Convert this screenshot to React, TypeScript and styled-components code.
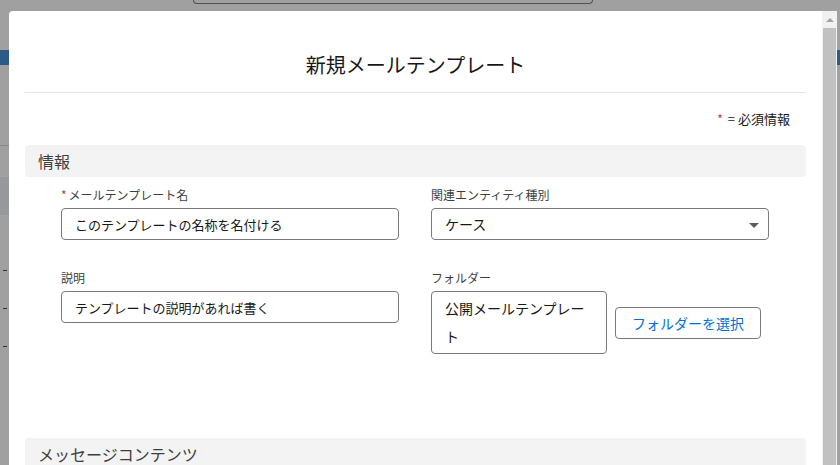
import React from "react";
import styled, { createGlobalStyle } from "styled-components";

const Global = createGlobalStyle`
  html, body { margin: 0; padding: 0; }
  body {
    font-family: "Noto Sans CJK JP", "Noto Sans", "Liberation Sans", sans-serif;
    color: #080707;
    background: #a0a0a0;
  }
  * { box-sizing: border-box; }
`;

const Screen = styled.div`
  width: 840px;
  height: 465px;
  overflow: hidden;
  background: #a0a0a0;
  display: flex;
  flex-direction: column;
`;

const TopStrip = styled.div`
  height: 11px;
  flex: none;
  display: flex;
  align-items: flex-start;
  padding-left: 193px;
`;

const SearchBoxEdge = styled.div`
  width: 400px;
  height: 4px;
  border: 1px solid #525252;
  border-top: none;
  border-radius: 0 0 5px 5px;
`;

const MainRow = styled.div`
  flex: 1;
  display: flex;
  min-height: 0;
`;

const Gutter = styled.div<{ $w: number }>`
  width: ${(p) => p.$w}px;
  flex: none;
  display: flex;
  flex-direction: column;
  overflow: hidden;
`;

const GutterSpace = styled.div<{ $h: number }>`
  height: ${(p) => p.$h}px;
  flex: none;
`;

const GutterBand = styled.div<{ $h: number; $c: string }>`
  height: ${(p) => p.$h}px;
  background: ${(p) => p.$c};
  flex: none;
`;

const GutterDash = styled.div`
  height: 1px;
  width: 4px;
  margin-left: 3px;
  background: #333;
  flex: none;
`;

const Modal = styled.div`
  width: 813px;
  flex: none;
  background: #fff;
  border-radius: 4px 0 0 0;
  display: flex;
  flex-direction: column;
`;

const Header = styled.header`
  margin: 0 16px;
  padding: 40px 0 13px;
  border-bottom: 1px solid #e5e5e5;
  text-align: center;
`;

const Title = styled.h2`
  margin: 0;
  font-size: 20px;
  line-height: 28px;
  font-weight: 400;
  color: #181818;
`;

const Body = styled.div`
  padding: 0 16px;
  display: flex;
  flex-direction: column;
`;

const Legend = styled.div`
  margin: 16px 16px 0 0;
  line-height: 20px;
  font-size: 13px;
  text-align: right;
  color: #181818;
`;

const Req = styled.abbr`
  color: #c23934;
  text-decoration: none;
  font-size: 12px;
  margin-right: 2px;
`;

const SectionHeader = styled.h3<{ $mt: number }>`
  margin: ${(p) => p.$mt}px 0 0;
  height: 32px;
  line-height: 32px;
  padding: 0 13px;
  background: #f3f3f3;
  border-radius: 4px;
  font-size: 16px;
  font-weight: 400;
  color: #3e3e3c;
`;

const FieldGrid = styled.div`
  display: grid;
  grid-template-columns: 338px 338px;
  column-gap: 32px;
  row-gap: 29px;
  padding: 9px 36px 0;
  align-items: start;
`;

const Field = styled.div`
  display: flex;
  flex-direction: column;
`;

const Label = styled.label`
  font-size: 12px;
  line-height: 18px;
  color: #3e3e3c;
  margin-bottom: 4px;
`;

const InputBox = styled.div<{ $size: number }>`
  height: 32px;
  border: 1px solid #7a7a7a;
  border-radius: 4px;
  padding: 0 13px;
  display: flex;
  align-items: center;
  font-size: ${(p) => p.$size}px;
  color: #181818;
  position: relative;
`;

const Caret = styled.span`
  position: absolute;
  right: 9px;
  top: 14px;
  width: 0;
  height: 0;
  border-left: 5px solid transparent;
  border-right: 5px solid transparent;
  border-top: 5px solid #5c5c5c;
`;

const FolderRow = styled.div`
  display: flex;
  align-items: center;
  gap: 8px;
`;

const FolderBox = styled.div`
  width: 176px;
  border: 1px solid #7a7a7a;
  border-radius: 4px;
  padding: 2px 13px 3px;
  font-size: 14px;
  line-height: 28px;
  color: #181818;
  word-break: break-all;
`;

const Button = styled.button`
  height: 32px;
  padding: 0 14px;
  width: 146px;
  border: 1px solid #7a7a7a;
  border-radius: 4px;
  background: #fff;
  color: #0070d2;
  font-family: inherit;
  font-size: 14px;
  line-height: 30px;
`;

const Scrollbar = styled.div`
  width: 15px;
  flex: none;
  background: #f1f1f1;
  display: flex;
  flex-direction: column;
  align-items: center;
  padding: 0 1px;
`;

const ScrollArrow = styled.div`
  height: 17px;
  flex: none;
  display: flex;
  align-items: center;
  justify-content: center;
  &::before {
    content: "";
    border-left: 4px solid transparent;
    border-right: 4px solid transparent;
    border-bottom: 4px solid #a3a3a3;
  }
`;

const ScrollThumb = styled.div`
  flex: 1;
  width: 13px;
  background: #c1c1c1;
`;

export default function App() {
  return (
    <>
      <Global />
      <Screen>
        <TopStrip>
          <SearchBoxEdge />
        </TopStrip>
        <MainRow>
          <Gutter $w={9}>
            <GutterSpace $h={39} />
            <GutterBand $h={15} $c="#2b5b86" />
            <GutterSpace $h={80} />
            <GutterBand $h={1} $c="#878787" />
            <GutterSpace $h={31} />
            <GutterBand $h={38} $c="#97989c" />
            <GutterSpace $h={55} />
            <GutterDash />
            <GutterSpace $h={37} />
            <GutterDash />
            <GutterSpace $h={37} />
            <GutterDash />
          </Gutter>
          <Modal>
            <Header>
              <Title>新規メールテンプレート</Title>
            </Header>
            <Body>
              <Legend>
                <Req title="required">*</Req> = 必須情報
              </Legend>
              <SectionHeader $mt={16}>情報</SectionHeader>
              <FieldGrid>
                <Field>
                  <Label>
                    <Req title="required">*</Req>メールテンプレート名
                  </Label>
                  <InputBox $size={13}>このテンプレートの名称を名付ける</InputBox>
                </Field>
                <Field>
                  <Label>関連エンティティ種別</Label>
                  <InputBox $size={14}>
                    ケース
                    <Caret />
                  </InputBox>
                </Field>
                <Field>
                  <Label>説明</Label>
                  <InputBox $size={13}>テンプレートの説明があれば書く</InputBox>
                </Field>
                <Field>
                  <Label>フォルダー</Label>
                  <FolderRow>
                    <FolderBox>公開メールテンプレート</FolderBox>
                    <Button>フォルダーを選択</Button>
                  </FolderRow>
                </Field>
              </FieldGrid>
              <SectionHeader $mt={84}>メッセージコンテンツ</SectionHeader>
            </Body>
          </Modal>
          <Scrollbar>
            <ScrollArrow />
            <ScrollThumb />
          </Scrollbar>
          <Gutter $w={3}>
            <GutterSpace $h={39} />
            <GutterBand $h={15} $c="#2b5b86" />
          </Gutter>
        </MainRow>
      </Screen>
    </>
  );
}
